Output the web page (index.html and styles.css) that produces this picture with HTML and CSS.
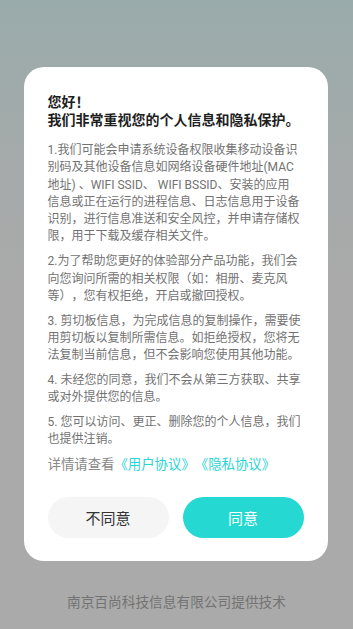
FILE: index.html
```html
<!DOCTYPE html>
<html>
<head>
<meta charset="UTF-8">
<title>隐私保护</title>
<link rel="stylesheet" href="styles.css">
</head>
<body>
<div class="page">
  <div class="dialog">
    <div class="dialog-title">您好！<br>我们非常重视您的个人信息和隐私保护。</div>
    <p class="item">1.我们可能会申请系统设备权限收集移动设备识别码及其他设备信息如网络设备硬件地址(MAC地址) 、WIFI SSID、 WIFI BSSID、安装的应用信&#8288;息或正在运行的进程信息、日志信息用于设备识别，进行信息准送和安全风控，并申请存储权限，用于下载及缓存相关文件。</p>
    <p class="item">2.为了帮助您更好的体验部分产品功能，我们会向您询问所需的相关权限（如：相册、麦克风等），您有权拒绝，开启或撤回授权。</p>
    <p class="item">3. 剪切板信息，为完成信息的复制操作，需要使用剪切板以复制所需信息。如拒绝授权，您将无法复制当前信息，但不会影响您使用其他功能。</p>
    <p class="item">4. 未经您的同意，我们不会从第三方获取、共享或对外提供您的信息。</p>
    <p class="item">5. 您可以访问、更正、删除您的个人信息，我们也提供注销。</p>
    <div class="detail">详情请查看<a href="#">《用户协议》</a><a href="#">《隐私协议》</a></div>
    <div class="actions">
      <button class="btn btn-no">不同意</button>
      <button class="btn btn-yes">同意</button>
    </div>
  </div>
  <div class="footer">南京百尚科技信息有限公司提供技术</div>
</div>
</body>
</html>
```
FILE: styles.css
```css
html, body {
  margin: 0;
  padding: 0;
  height: 100%;
}
body {
  background: linear-gradient(to bottom, #9aabab 0%, #a5aaaa 25%, #aaaaaa 45%);
  font-family: Roboto, "Noto Sans CJK SC", sans-serif;
  text-spacing-trim: space-all;
}
.page {
  display: flex;
  flex-direction: column;
  align-items: center;
  padding-top: 67px;
}
.dialog {
  box-sizing: border-box;
  width: 304px;
  margin-left: -2px;
  background: #fff;
  border-radius: 20px;
  padding: 26px 24px 23px 24px;
}
.dialog-title {
  font-size: 14px;
  line-height: 18px;
  font-weight: bold;
  color: #1f1f1f;
  margin-bottom: 13px;
}
.item {
  margin: 0 0 7.5px 0;
  font-size: 12px;
  line-height: 17.3px;
  color: #727272;
}
.detail {
  margin-top: -1px;
  font-size: 13.4px;
  line-height: 19px;
  color: #888;
}
.detail a {
  color: #2ad4d4;
  text-decoration: none;
}
.actions {
  display: flex;
  justify-content: space-between;
  margin-top: 23px;
}
.btn {
  width: 121px;
  height: 41px;
  border: none;
  border-radius: 21px;
  font-family: Roboto, "Noto Sans CJK SC", sans-serif;
  font-size: 15px;
  padding: 0;
}
.btn-no {
  background: #f5f5f5;
  color: #333;
}
.btn-yes {
  background: #25d8d2;
  color: #fff;
}
.footer {
  margin-top: 31px;
  font-size: 13.7px;
  line-height: 20px;
  color: #737373;
}
```
